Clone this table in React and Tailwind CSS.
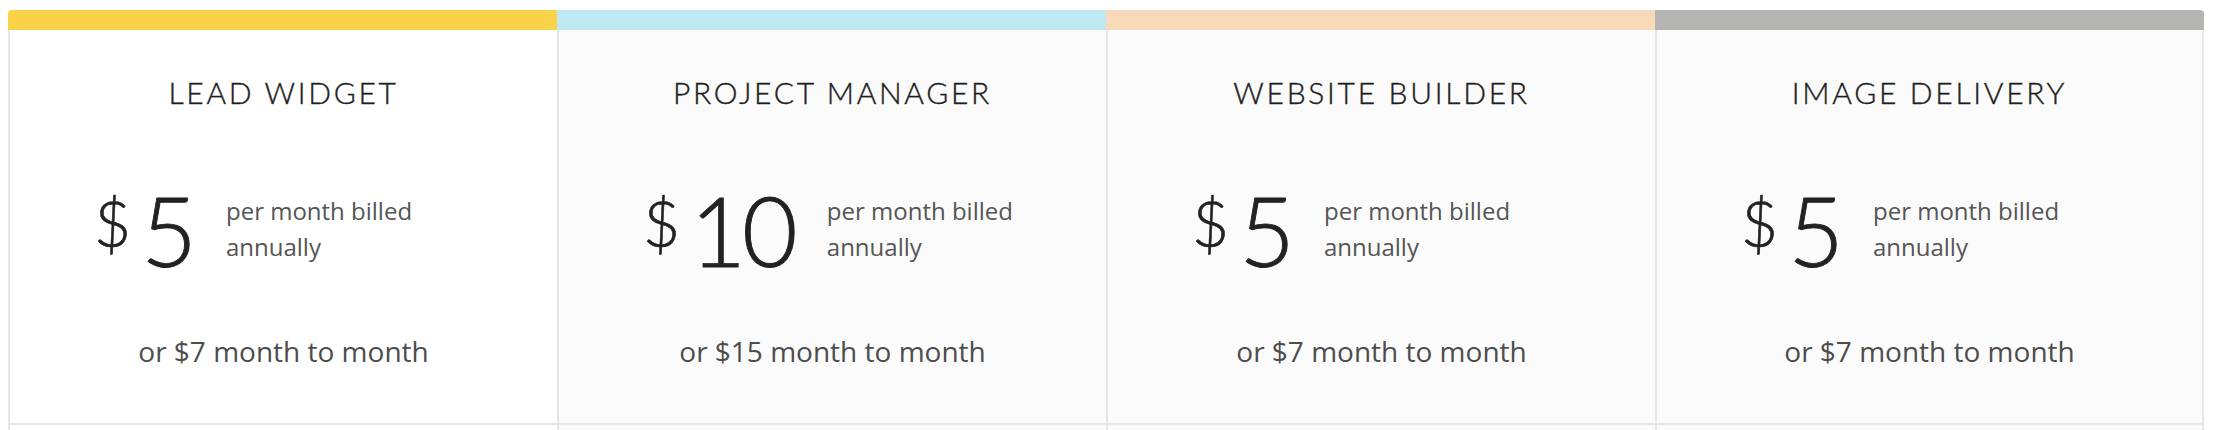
const PLANS = [
  { name: 'LEAD WIDGET', price: '5', monthly: '7', bar: 'bg-[#fad249]', bg: 'bg-white', first: true },
  { name: 'PROJECT MANAGER', price: '10', monthly: '15', bar: 'bg-[#bee9f2]', bg: 'bg-[#fbfbfb]' },
  { name: 'WEBSITE BUILDER', price: '5', monthly: '7', bar: 'bg-[#f8dabb]', bg: 'bg-[#fbfbfb]' },
  { name: 'IMAGE DELIVERY', price: '5', monthly: '7', bar: 'bg-[#b5b5b3]', bg: 'bg-[#fbfbfb]', last: true },
]

function PlanColumn({ plan }) {
  return (
    <div className="flex flex-1 flex-col">
      <div className={`h-5 ${plan.bar} ${plan.first ? 'rounded-tl-[4px]' : ''} ${plan.last ? 'rounded-tr-[4px]' : ''}`} />
      <div className={`${plan.bg} border-l-2 border-[#e6e6e6] ${plan.last ? 'border-r-2' : ''}`}>
        <div className="border-b-2 border-[#e6e6e6] pt-[44px] pb-[51px]">
          <h2 className="text-center font-['Lato',sans-serif] text-[30px] font-light leading-[36px] tracking-[0.09em] text-[#1f1f1f] [-webkit-text-stroke:0.4px_#1f1f1f]">
            {plan.name}
          </h2>

          <div className="mt-[72px] flex items-start pl-[84px]">
            <span className="mt-[9px] font-['Lato',sans-serif] text-[64px] font-light leading-none text-[#222] [-webkit-text-stroke:0.6px_#222]">$</span>
            <span className="ml-[10px] font-['Lato',sans-serif] text-[96px] font-light leading-none tracking-[-0.04em] text-[#222] [-webkit-text-stroke:0.9px_#222]">
              {plan.price}
            </span>
            <p className="ml-[33px] mt-[11px] w-[215px] font-['Open_Sans',sans-serif] text-[24px] leading-[36px] text-[#555]">
              per month billed annually
            </p>
          </div>

          <p className="mt-[52px] text-center font-['Open_Sans',sans-serif] text-[28px] leading-[42px] text-[#4d4d4d]">
            or ${plan.monthly} month to month
          </p>
        </div>
        <div className="h-10" />
      </div>
    </div>
  )
}

export default function App() {
  return (
    <div className="min-h-screen bg-white pl-2 pr-[10px] pt-[10px]">
      <div className="flex">
        {PLANS.map(p => <PlanColumn key={p.name} plan={p} />)}
      </div>
    </div>
  )
}
